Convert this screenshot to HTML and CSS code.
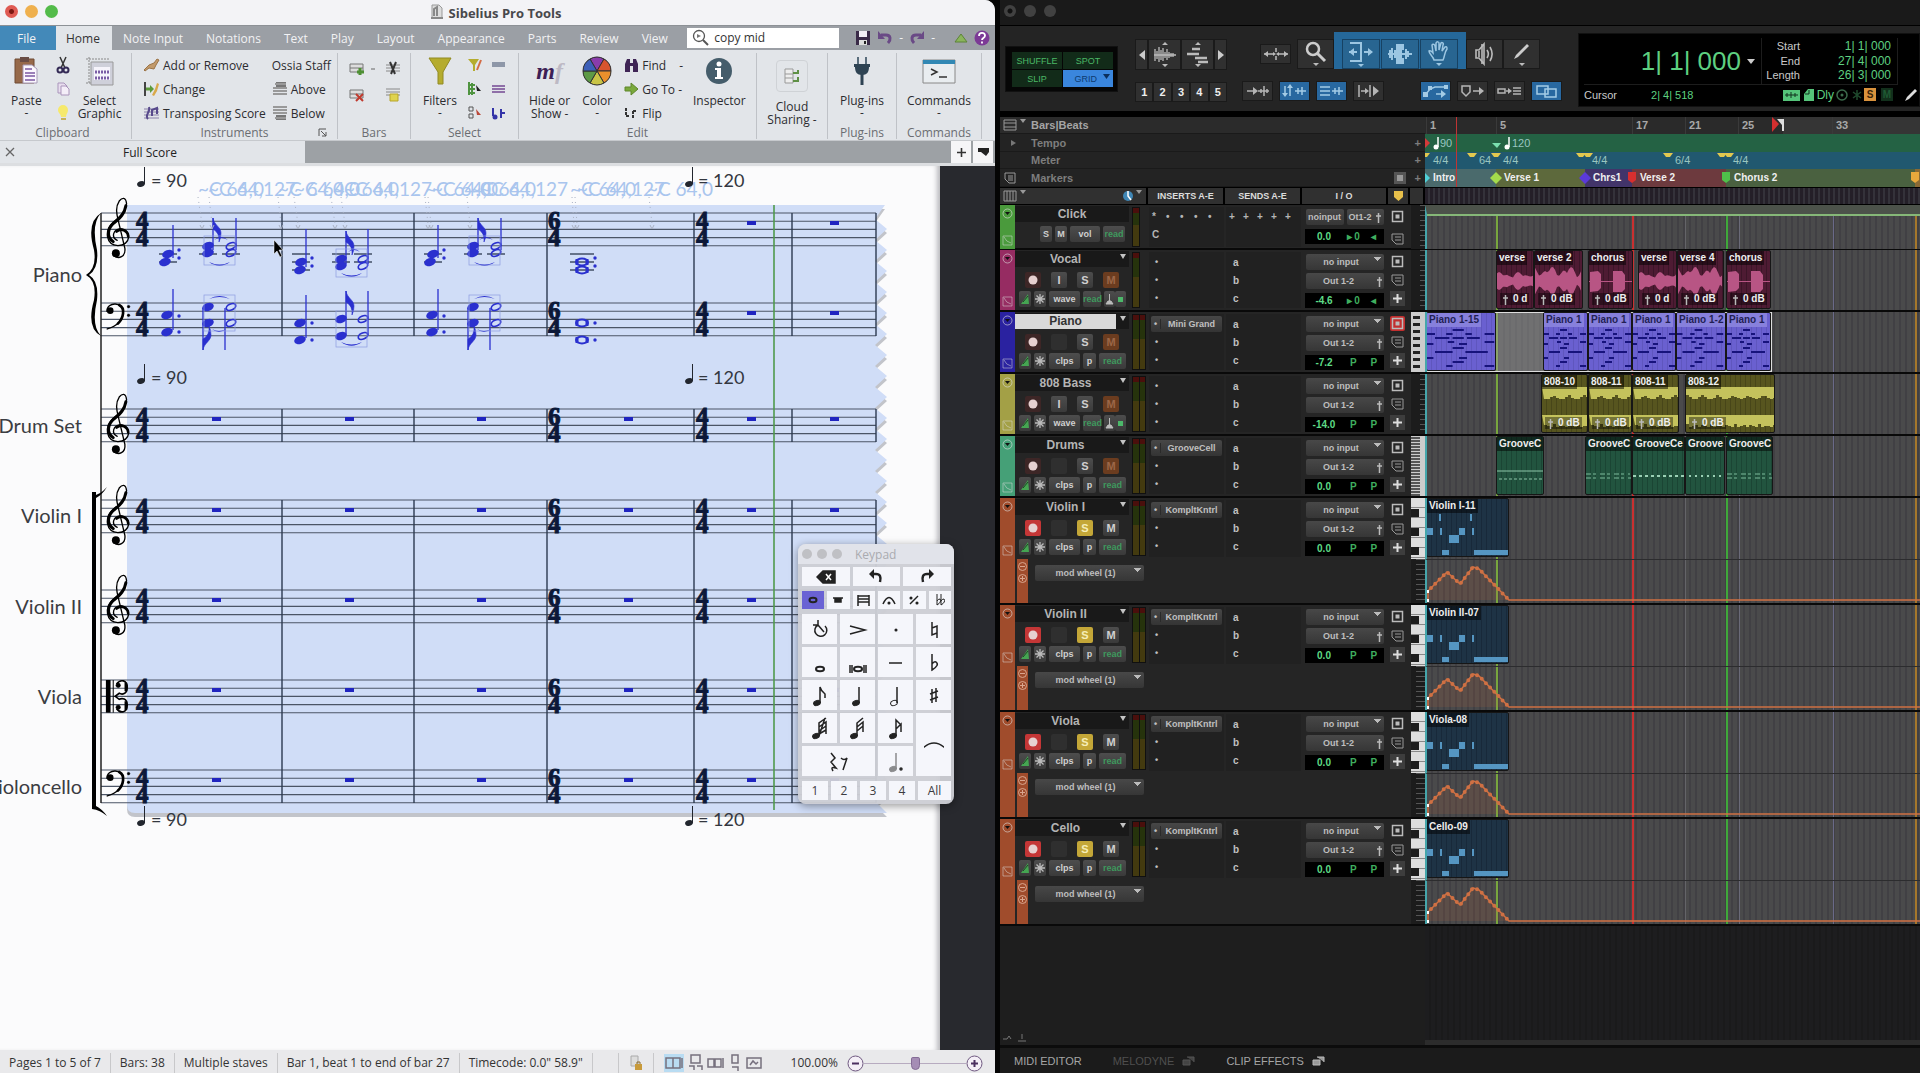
FILE: index.html
```html
<!DOCTYPE html>
<html lang="en">
<head>
    <meta charset="UTF-8">
    <meta name="viewport" content="width=device-width, initial-scale=1.0">
    <title>Sibelius Pro Tools</title>
    <link rel="stylesheet" href="styles.css">
</head>
<body>
    <main class="sib">
        <header class="sib-title">
            <span class="lights"><i class="red"></i><i class="amber"></i><i class="green"></i></span>
            <h1>
                <svg width="14" height="16" viewBox="0 0 14 16"><path d="M2 1h7l3 3v10H2z" fill="#ddd" stroke="#999"/><path d="M4 12V5l3-2v9M1 14h12" stroke="#888" stroke-width="2" fill="none"/></svg>
                Sibelius Pro Tools
            </h1>
        </header>

        <nav class="tabs">
            <a href="#" class="file">File</a>
            <a href="#" class="active">Home</a>
            <a href="#">Note Input</a>
            <a href="#">Notations</a>
            <a href="#">Text</a>
            <a href="#">Play</a>
            <a href="#">Layout</a>
            <a href="#">Appearance</a>
            <a href="#">Parts</a>
            <a href="#">Review</a>
            <a href="#">View</a>
            <label class="search">
                <svg width="18" height="18" viewBox="0 0 18 18"><circle cx="7" cy="7" r="5.500" fill="#fff" stroke="#555" stroke-width="1.300"/><path d="M11 11l5 5" stroke="#555" stroke-width="2"/><path d="M5 5l4 2-4 2z" fill="#777"/></svg>
                <input type="text" value="copy mid" aria-label="Find in ribbon">
            </label>
            <div class="quick">
                <button aria-label="Save"><svg width="16" height="16" viewBox="0 0 16 16"><path d="M1 1h14v14H1z" fill="#3a2a48"/><path d="M4 1h8v6H4z" fill="#f2eef5"/><path d="M4 10h8v5H4z" fill="#ddd"/><path d="M9 11h2v3H9z" fill="#222"/></svg></button>
                <button aria-label="Undo"><svg width="16" height="16" viewBox="0 0 16 16"><path d="M4 5h5c5 0 5 5 2 8" fill="none" stroke="#6a4a86" stroke-width="3"/><path d="M1 1v8h7z" fill="#6a4a86"/></svg></button>
                <i>-</i>
                <button aria-label="Redo"><svg width="16" height="16" viewBox="0 0 16 16"><path d="M12 5H7c-5 0-5 5-2 8" fill="none" stroke="#6a4a86" stroke-width="3"/><path d="M15 1v8H8z" fill="#6a4a86"/></svg></button>
                <i>-</i>
                <button class="gap" aria-label="Minimize ribbon"><svg width="14" height="14" viewBox="0 0 14 14"><path d="M7 3l6 8H1z" fill="#8ab45c" stroke="#5c8438"/></svg></button>
                <button aria-label="Help"><svg width="16" height="16" viewBox="0 0 16 16"><circle cx="8" cy="8" r="7.500" fill="#7c3a96"/><path d="M5 6c0-4 6-4 6-.5C11 8 8 8 8 10m0 1.500v2" fill="none" stroke="#fff" stroke-width="1.800"/></svg></button>
            </div>
        </nav>

        <section class="ribbon">
            <div class="group clipboard">
                <div class="items">
                    <button class="big">
                        <svg width="26" height="30" viewBox="0 0 26 30"><path d="M2 3h19v24H2z" fill="#96694a" stroke="#6f4a33"/><path d="M7 1h9v5H7z" fill="#6a4d45"/><path d="M10 9h9l5 4v14H10z" fill="#fbf7fd" stroke="#a79bb8"/><path d="M12 13h7m-7 4h10m-10 3h10m-10 4h10" stroke="#9b7fb8" stroke-width="2"/></svg>
                        Paste<b>-</b>
                    </button>
                    <div class="minis">
                        <button aria-label="Cut"><svg width="14" height="18" viewBox="0 0 14 18"><path d="M4 1l5 11M10 1L5 12" stroke="#333" stroke-width="1.500"/><circle cx="4" cy="14" r="2.500" fill="none" stroke="#332a55" stroke-width="2"/><circle cx="10" cy="14" r="2.500" fill="none" stroke="#332a55" stroke-width="2"/></svg></button>
                        <button aria-label="Copy"><svg width="14" height="16" viewBox="0 0 14 16"><path d="M2 2h6l3 3v7H2z" fill="#e8deee" stroke="#aa95bb"/><path d="M5 5h5l3 3v6H5z" fill="#f4eef8" stroke="#aa95bb"/></svg></button>
                        <button aria-label="Ideas"><svg width="14" height="16" viewBox="0 0 14 16"><path d="M2 5a5 5 0 0 1 10 0c0 3-2 4-2 7H5c0-3-3-4-3-7z" fill="#f6e96c"/><path d="M5 13h5v2H5z" fill="#c9b25a"/></svg></button>
                    </div>
                    <button class="big">
                        <svg width="30" height="30" viewBox="0 0 30 30"><path d="M4 1v26M1 3h24M1 27h5" stroke="#888" stroke-dasharray="2 1"/><path d="M6 6h22v23H6z" fill="#cfd0da" stroke="#999"/><path d="M9 11h16v13H9z" fill="#f6f4fb"/><path d="M10 16h14m-14 6h14" stroke="#7a5ca5" stroke-width="3" stroke-dasharray="2 1"/></svg>
                        Select<br>Graphic
                    </button>
                </div>
                <h2>Clipboard</h2>
            </div>
            <div class="group instruments">
                <div class="items">
                    <div class="col">
                        <button><svg width="17" height="14" viewBox="0 0 17 14"><path d="M1 12l5-5 5-2 3-4 2 1-3 5-2 4-5-1-4 3z" fill="#c29a6b" stroke="#9b7447"/></svg>Add or Remove</button>
                        <button><svg width="17" height="16" viewBox="0 0 17 16"><path d="M2 1v14" stroke="#444" stroke-width="2"/><path d="M3 8h6" stroke="#5d9b3c" stroke-width="3"/><path d="M7 4l4 4-4 4z" fill="#5d9b3c"/><path d="M9 14l3-6 2-6 2 1-2 7-3 5z" fill="#d9a94a"/></svg>Change</button>
                        <button><svg width="17" height="14" viewBox="0 0 17 14"><path d="M1 3h15M1 6h15M1 9h15M1 12h15" stroke="#8a80aa"/><path d="M5 13c-4-4 3-7 1-12M9 10V4l5-2v6" fill="none" stroke="#584a8c" stroke-width="2"/></svg>Transposing Score</button>
                    </div>
                    <div class="col">
                        <span>Ossia Staff</span>
                        <button><svg width="16" height="16" viewBox="0 0 16 16"><path d="M4 1h10v5H4z" fill="#777"/><path d="M1 7h14M1 10h14M1 13h14M3 3h11" stroke="#999" stroke-width="2"/></svg>Above</button>
                        <button><svg width="16" height="16" viewBox="0 0 16 16"><path d="M4 10h10v5H4z" fill="#777"/><path d="M1 2h14M1 5h14M1 8h14M3 13h11" stroke="#999" stroke-width="2"/></svg>Below</button>
                    </div>
                </div>
                <h2>Instruments</h2>
                <svg class="launcher" width="9" height="9" viewBox="0 0 9 9"><path d="M1 8V1h7M3 3l5 5M8 4v4H4" fill="none" stroke="#555"/></svg>
            </div>
            <div class="group bars">
                <div class="items quad">
                    <button aria-label="Add bar"><svg width="28" height="16" viewBox="0 0 28 16"><path d="M1 3h13v8H1zM1 7h13" fill="#ddd" stroke="#777"/><path d="M11 7v7m-3-3h7" stroke="#4d8f33" stroke-width="3"/><path d="M22 8h4" stroke="#666"/></svg></button>
                    <button aria-label="Split"><svg width="16" height="16" viewBox="0 0 16 16"><path d="M1 4h14M1 7h14M1 10h14" stroke="#888"/><path d="M5 1l5 12M11 1L6 13" stroke="#333" stroke-width="2"/></svg></button>
                    <button aria-label="Delete bar"><svg width="16" height="16" viewBox="0 0 16 16"><path d="M1 3h13v8H1zM1 7h13" fill="#ddd" stroke="#777"/><path d="M7 7l7 7m0-7l-7 7" stroke="#c03a2e" stroke-width="2"/></svg></button>
                    <button aria-label="Join"><svg width="16" height="16" viewBox="0 0 16 16"><path d="M1 2h14M1 5h14M1 8h14" stroke="#888"/><path d="M5 7h8v7H5z" fill="#dfd34f" stroke="#b7a52a"/></svg></button>
                </div>
                <h2>Bars</h2>
            </div>
            <div class="group select">
                <div class="items">
                    <button class="big">
                        <svg width="24" height="30" viewBox="0 0 24 30"><path d="M1 2h22l-8 14v12h-5V16z" fill="#b5ac2e" stroke="#918a22"/></svg>
                        Filters<b>-</b>
                    </button>
                    <div class="minis two">
                        <button aria-label="Advanced filter"><svg width="15" height="16" viewBox="0 0 15 16"><path d="M1 2h11L8 8v6H6V8z" fill="#b5ac2e"/><path d="M10 13l4-10" stroke="#d36c45" stroke-width="2"/></svg></button>
                        <button aria-label="System"><svg width="15" height="16" viewBox="0 0 15 16"><path d="M1 5h13v5H1z" fill="#8e97a8"/></svg></button>
                        <button aria-label="Select more"><svg width="15" height="16" viewBox="0 0 15 16"><path d="M2 1v13M5 2v12M1 4h7M1 8h7M1 12h7" stroke="#4f9440" stroke-width="2"/><path d="M9 4l5 6h-4z" fill="#222"/></svg></button>
                        <button aria-label="Staff"><svg width="15" height="16" viewBox="0 0 15 16"><path d="M1 5h13M1 8h13M1 11h13" stroke="#8f6fa8" stroke-width="2"/></svg></button>
                        <button aria-label="Select all"><svg width="15" height="16" viewBox="0 0 15 16"><path d="M2 2h4v4H2zM2 9h4v4H2z" fill="none" stroke="#555"/><path d="M9 4l5 6h-4z" fill="#b9483a"/></svg></button>
                        <button aria-label="Select bars"><svg width="15" height="16" viewBox="0 0 15 16"><path d="M2 11V3M10 13V4" stroke="#3434a8" stroke-width="2"/><circle cx="4" cy="12" r="2.500" fill="#3434a8"/><path d="M9 8h5" stroke="#3434a8" stroke-width="2"/></svg></button>
                    </div>
                </div>
                <h2>Select</h2>
            </div>
            <div class="group edit">
                <div class="items">
                    <button class="big">
                        <span class="mf">m<i>f</i></span>
                        Hide or<br>Show -
                    </button>
                    <button class="big">
                        <svg width="30" height="30" viewBox="-15 -15 30 30"><circle r="14" fill="#333"/><g stroke="#333"><path d="M0 0L-7-12A14 14 0 0 1 7-12z" fill="#8a3cab"/><path d="M0 0L7-12A14 14 0 0 1 14 0z" fill="#d8552f"/><path d="M0 0H14A14 14 0 0 1 7 12z" fill="#ea8f2c"/><path d="M0 0L7 12A14 14 0 0 1-7 12z" fill="#c9c446"/><path d="M0 0L-7 12A14 14 0 0 1-14 0z" fill="#5d9a46"/><path d="M0 0H-14A14 14 0 0 1-7-12z" fill="#3c5fb8"/></g></svg>
                        Color<b>-</b>
                    </button>
                    <div class="col">
                        <button><svg width="15" height="15" viewBox="0 0 15 15"><path d="M1 14V6l2-5h3v4h3V1h3l2 5v8H9V8H6v6z" fill="#3f2555"/></svg>Find <i>-</i></button>
                        <button><svg width="15" height="15" viewBox="0 0 15 15"><path d="M1 5h6V1l7 6-7 6V9H1z" fill="#7aa93c" stroke="#5e862b"/></svg>Go To -</button>
                        <button><svg width="15" height="15" viewBox="0 0 15 15"><path d="M2 2v8m0 0h3M9 5v8m0-8h4" stroke="#333" stroke-width="2" stroke-dasharray="3 1"/></svg>Flip</button>
                    </div>
                    <button class="big">
                        <svg width="28" height="30" viewBox="0 0 28 30"><circle cx="14" cy="15" r="13" fill="#455d6b"/><circle cx="14" cy="8" r="2.500" fill="#fff"/><path d="M10 12h6v9h2v2h-8v-2h2v-7h-2z" fill="#fff"/></svg>
                        Inspector
                    </button>
                </div>
                <h2>Edit</h2>
            </div>
            <div class="group cloud">
                <div class="items">
                    <button class="big">
                        <span class="frame"><svg width="16" height="17" viewBox="0 0 16 17"><path d="M1 1h8v14H1zM1 6h8M1 10h8" fill="#eee" stroke="#999"/><path d="M9 5h5V2m0 7v4H9" fill="none" stroke="#5f9045" stroke-width="2"/></svg></span>
                        Cloud<br>Sharing -
                    </button>
                </div>
            </div>
            <div class="group plugins">
                <div class="items">
                    <button class="big">
                        <svg width="20" height="30" viewBox="0 0 20 30"><path d="M6 1v8M14 1v8" stroke="#5a6d7c" stroke-width="2"/><path d="M2 8h16v3h-1c0 5-2 8-7 8s-7-3-7-8H2z" fill="#2e4353"/><path d="M10 18v11" stroke="#2e4353" stroke-width="3"/></svg>
                        Plug-ins<b>-</b>
                    </button>
                </div>
                <h2>Plug-ins</h2>
            </div>
            <div class="group commands">
                <div class="items">
                    <button class="big">
                        <svg width="34" height="30" viewBox="0 0 34 30"><path d="M1 4h32v23H1z" fill="#e9edf0" stroke="#888"/><path d="M1 4h32v4H1z" fill="#3288b4"/><path d="M9 13l6 3-6 3M17 21h8" fill="none" stroke="#333" stroke-width="1.500"/></svg>
                        Commands<b>-</b>
                    </button>
                </div>
                <h2>Commands</h2>
            </div>
        </section>

        <nav class="docs">
            <div class="doc">
                <button class="close" aria-label="Close tab"><svg width="10" height="10" viewBox="0 0 10 10"><path d="M1 1l8 8M9 1L1 9" stroke="#666" stroke-width="1.300"/></svg></button>
                <span>Full Score</span>
            </div>
            <button aria-label="New tab"><svg width="11" height="11" viewBox="0 0 11 11"><path d="M5.500 1v9M1 5.500h9" stroke="#333" stroke-width="1.600"/></svg></button>
            <button aria-label="Switch tabs"><svg width="13" height="10" viewBox="0 0 13 10"><path d="M1 1h11v4H1zM4 5h8l-3 4z" fill="#222"/></svg></button>
        </nav>

        <section class="desk">
            <div class="page"><svg id="score" class="score"></svg></div>
            <aside class="keypad">
                <h2><i></i><i></i><i></i><span>Keypad</span></h2>
                <div class="keys k3" id="keysTop"></div>
                <div class="keys k6" id="keysMode"></div>
                <div class="keys pad" id="keysPad"></div>
                <div class="keys k5">
                    <button>1</button><button>2</button><button>3</button><button>4</button><button>All</button>
                </div>
            </aside>
        </section>

        <footer class="status">
            <span>Pages 1 to 5 of 7</span>
            <span>Bars: 38</span>
            <span>Multiple staves</span>
            <span>Bar 1, beat 1 to end of bar 27</span>
            <span>Timecode: 0.0" 58.9"</span>
            <span class="blank"></span>
            <span class="lock"><svg width="14" height="18" viewBox="0 0 14 18"><path d="M2 2h7v10H2z" fill="#ddd" stroke="#aaa"/><path d="M6 10h7v6H6z" fill="#c89a3a"/><path d="M8 10V8h3v2" fill="none" stroke="#8a6a2a"/></svg></span>
            <div class="views" id="views"></div>
            <span class="pct">100.00%</span>
            <div class="zoom">
                <button aria-label="Zoom out"><svg width="17" height="17" viewBox="0 0 17 17"><circle cx="8.500" cy="8.500" r="7.500" fill="#f4eff7" stroke="#6e5880"/><path d="M5 8.500h7" stroke="#4b2f60" stroke-width="2"/></svg></button>
                <input type="range" min="0" max="100" value="50" aria-label="Zoom">
                <button aria-label="Zoom in"><svg width="17" height="17" viewBox="0 0 17 17"><circle cx="8.500" cy="8.500" r="7.500" fill="#f4eff7" stroke="#6e5880"/><path d="M5 8.500h7M8.500 5v7" stroke="#4b2f60" stroke-width="2"/></svg></button>
            </div>
        </footer>
    </main>

    <main class="pt">
        <header class="pt-title"><i class="dot"></i><i></i><i></i></header>

        <section class="toolbar">
            <div class="modes">
                <button>SHUFFLE</button><button>SPOT</button>
                <button>SLIP</button><button class="on">GRID <svg width="7" height="5" viewBox="0 0 7 5"><path d="M0 0h7L3.500 5z" fill="#0b2f5c"/></svg></button>
            </div>
            <div class="zoomer">
                <div class="row tall">
                    <button class="thin" aria-label="Zoom out"><svg width="6" height="10" viewBox="0 0 6 10"><path d="M6 0v10L0 5z" fill="#ccc"/></svg></button>
                    <button aria-label="Audio zoom"><svg width="24" height="26" viewBox="0 0 24 26"><path d="M9 3l3-3 3 3zM9 22l3 3 3-3z" fill="#bbb"/><path d="M1 13h22M2 7v12M4 9v8M6 5v15M8 8v10M10 6v13M12 10v6M14 7v11M16 10v6M18 11v4M20 11v4" stroke="#bbb" stroke-width="1.300"/></svg></button>
                    <button aria-label="MIDI zoom"><svg width="24" height="26" viewBox="0 0 24 26"><path d="M9 3l3-3 3 3zM9 22l3 3 3-3z" fill="#bbb"/><path d="M6 7h8M1 12h12M9 16h12M12 20h10" stroke="#bbb" stroke-width="2.500"/></svg></button>
                    <button class="thin" aria-label="Zoom in"><svg width="6" height="10" viewBox="0 0 6 10"><path d="M0 0v10l6-5z" fill="#ccc"/></svg></button>
                </div>
                <div class="row five"><button>1</button><button>2</button><button>3</button><button>4</button><button>5</button></div>
            </div>
            <div class="tools">
                <div class="row">
                    <button class="small" aria-label="Zoom toggle"><svg width="26" height="14" viewBox="0 0 26 14"><path d="M1 7h9M16 7h9M13 1v4M13 9v4" stroke="#bbb" stroke-width="1.500"/><path d="M5 4L1 7l4 3zM21 4l4 3-4 3zM10 5l3 2-3 2zM16 5l-3 2 3 2z" fill="#bbb"/></svg></button>
                    <button aria-label="Zoomer"><svg width="22" height="26" viewBox="0 0 22 26"><circle cx="8" cy="8" r="6" fill="none" stroke="#ccc" stroke-width="2.500"/><path d="M12 12l8 8" stroke="#ccc" stroke-width="3"/><path d="M8 22h6l-3 3z" fill="#bbb"/></svg></button>
                    <div class="smart">
                        <button aria-label="Trim"><svg width="26" height="26" viewBox="0 0 26 26"><path d="M2 2h11v18H2M1 11h8M16 11h8" fill="none" stroke="#9cc6e2" stroke-width="2"/><path d="M6 7L1 11l5 4zM20 7l5 4-5 4z" fill="#9cc6e2"/><path d="M10 23h6l-3 3z" fill="#9cc6e2"/></svg></button>
                        <button aria-label="Selector"><svg width="26" height="24" viewBox="0 0 26 24"><path d="M9 2h8v6h-2v8h2v6H9v-6H7V8h2z" fill="#9cc6e2"/><path d="M1 12h24M3 8v8M5 6v12M19 7v10M21 9v6" stroke="#9cc6e2" stroke-width="2"/></svg></button>
                        <button aria-label="Grabber"><svg width="22" height="26" viewBox="0 0 22 26"><path d="M6 19c-1-4-5-6-5-9 2-1 3 1 4 2L4 4c1-2 3 0 3 1l1 5V2c1-2 3-1 3 0v7l2-7c1-1 3 0 2 2l-1 6 3-4c2-1 2 1 2 2-3 4-2 7-4 11z" fill="none" stroke="#9cc6e2" stroke-width="1.500"/><path d="M8 22h6l-3 3z" fill="#9cc6e2"/></svg></button>
                    </div>
                    <button aria-label="Scrubber"><svg width="22" height="24" viewBox="0 0 22 24"><path d="M2 8h3l5-6v20l-5-6H2z" fill="none" stroke="#bbb" stroke-width="1.600"/><path d="M8 2v20M13 8c2 3 2 5 0 8M16 5c3 5 3 9 0 14M5 9v6" fill="none" stroke="#bbb" stroke-width="1.600"/></svg></button>
                    <button aria-label="Pencil"><svg width="20" height="26" viewBox="0 0 20 26"><path d="M2 18l2-4L15 3l2 2L6 16z" fill="#ccc"/><path d="M7 22h6l-3 3z" fill="#bbb"/></svg></button>
                </div>
                <div class="row opts" id="opts"></div>
            </div>
            <div class="counter">
                <div class="main">1| 1| 000 <svg width="8" height="5" viewBox="0 0 8 5"><path d="M0 0h8L4 5z" fill="#ccc"/></svg></div>
                <dl>
                    <dt>Start</dt><dd>1| 1| 000</dd>
                    <dt>End</dt><dd>27| 4| 000</dd>
                    <dt>Length</dt><dd>26| 3| 000</dd>
                </dl>
                <div class="cursor"><span>Cursor</span><output>2| 4| 518</output></div>
                <div class="flags">
                    <svg width="32" height="14" viewBox="0 0 32 14"><path d="M0 2h17v11H0zM25 1h6v12H21V6z" fill="#55c47a"/><path d="M2 7h13M4 5v4M8 4v6M12 5v4M22 6h4V2" stroke="#12331f" fill="none"/></svg>
                    <span>Dly</span>
                    <svg width="26" height="14" viewBox="0 0 26 14"><circle cx="6" cy="7" r="5" fill="none" stroke="#3c6b4c" stroke-width="1.500"/><circle cx="6" cy="7" r="1.500" fill="#3c6b4c"/><path d="M21 2v10M17 4l8 6M25 4l-8 6" stroke="#1f4a2d" stroke-width="1.500"/></svg>
                    <b class="solo">S</b><b class="mute">M</b>
                </div>
                <svg class="pen" width="14" height="14" viewBox="0 0 14 14"><path d="M1 13l2-4 8-8 2 2-8 8z" fill="#ddd"/></svg>
            </div>
        </section>

        <section class="rulers">
            <div class="names">
                <div class="bb"><svg width="24" height="12" viewBox="0 0 24 12"><path d="M1 1h12v10H1zM1 4h12M1 8h12" fill="none" stroke="#999"/><path d="M17 0h6l-3 4z" fill="#999"/></svg>Bars|Beats</div>
                <div><svg width="24" height="12" viewBox="0 0 24 12"><path d="M8 3l5 3-5 3z" fill="#777"/></svg>Tempo<em>+</em></div>
                <div><svg width="24" height="12"></svg>Meter<em>+</em></div>
                <div><svg width="24" height="12" viewBox="0 0 24 12"><path d="M2 1h10v10H6L2 7zM5 4h5M5 6h5M5 8h5" fill="none" stroke="#999"/></svg>Markers<em><svg width="12" height="12" viewBox="0 0 12 12"><path d="M0 0h12v12H0z" fill="#555"/><path d="M3 3h6v6H3z" fill="#999"/></svg> +</em></div>
            </div>
            <svg id="ruler" class="ruler"></svg>
        </section>

        <section class="heads">
            <div class="list"><svg width="24" height="12" viewBox="0 0 24 12"><path d="M1 1h12v10H1zM4 1v10M7 1v10M10 1v10" fill="none" stroke="#999"/><path d="M17 0h6l-3 4z" fill="#999"/></svg><svg width="20" height="12" viewBox="0 0 20 12"><circle cx="6" cy="6" r="5" fill="#3f86b5"/><path d="M6 1v5l3 4" stroke="#fff" fill="none" stroke-width="1.500"/><path d="M14 0h6l-3 4z" fill="#999"/></svg></div>
            <div>INSERTS A-E</div>
            <div>SENDS A-E</div>
            <div>I / O</div>
            <div><svg width="9" height="10" viewBox="0 0 9 10"><path d="M0 0h9v6L4.500 10 0 6z" fill="#e8c04b"/></svg></div>
            <div></div>
            <div class="stripe"></div>
        </section>

        <section class="tracks" id="tracks"></section>
        <section class="rest"><div class="void"><svg width="30" height="10" viewBox="0 0 30 10"><path d="M1 6h4l2-3 2 3M16 8h8M20 1v5" fill="none" stroke="#777"/></svg></div><div class="empty"></div></section>

        <footer class="dock">
            <button>MIDI EDITOR</button>
            <button class="dim">MELODYNE <svg width="13" height="10" viewBox="0 0 13 10"><path d="M1 4h7v5H1zM5 1h7v5" fill="#444" stroke="#555"/></svg></button>
            <button>CLIP EFFECTS <svg width="13" height="10" viewBox="0 0 13 10"><path d="M1 4h7v5H1zM5 1h7v5" fill="#999" stroke="#bbb"/></svg></button>
        </footer>
    </main>

    <script src="script.js"></script>
</body>
</html>
```
FILE: styles.css
```css
* {
    box-sizing: border-box;
}
body {
    margin: 0;
    min-height: 100vh;
    display: grid;
    grid-template-columns: 995fr 925fr;
    background: #050505;
    font-family: "Open Sans", sans-serif;
    font-size: 12px;
    overflow: hidden;
}
button, input, select {
    font: inherit;
    color: inherit;
    margin: 0;
    padding: 0;
    border: none;
    background: none;
}
h1, h2, dl, dt, dd {
    margin: 0;
    font-size: inherit;
    font-weight: normal;
}
a {
    color: inherit;
    text-decoration: none;
}
svg {
    flex: none;
    display: block;
}
i {
    font-style: normal;
}

/* ---- notation window ---- */
.sib {
    display: flex;
    flex-direction: column;
    min-width: 0;
    border-radius: 0 10px 0 0;
    overflow: hidden;
    background: #e2e5e9;
    color: #2c2c30;
}
.sib-title {
    position: relative;
    height: 25px;
    background: #f3f3f6;
    display: flex;
    align-items: center;
    justify-content: center;
}
.sib-title h1 {
    display: flex;
    gap: 5px;
    font-size: 13px;
    font-weight: 700;
    line-height: 18px;
    color: #48484c;
    padding-right: 4px;
}
.lights {
    position: absolute;
    left: 5px;
    top: 5px;
    display: flex;
    gap: 7px;
}
.lights i {
    width: 13px;
    height: 13px;
    border-radius: 50%;
}
.red { background: radial-gradient(#7c1712 2px, #df5a53 3px); }
.amber { background: #efb04e; }
.green { background: #53bb4a; }

.tabs {
    height: 25px;
    display: flex;
    background: #9b9fa5;
    color: #f2f2f4;
    line-height: 26px;
    border-top: 1px solid #8d9196;
}
.tabs a {
    padding: 0 12px 0 11px;
    font-size: 12px;
    white-space: nowrap;
}
.tabs .file {
    width: 56px;
    padding: 0 17px;
    background: #4389b9;
}
.tabs .active {
    width: 56px;
    padding: 0 10px;
    background: #e2e5e9;
    color: #333;
}
.search {
    display: flex;
    align-items: center;
    gap: 4px;
    width: 152px;
    height: 20px;
    margin: 2px 16px 0 auto;
    padding-left: 5px;
    background: #fff;
    color: #333;
}
.search input {
    width: 120px;
    outline: none;
}
.quick {
    display: flex;
    align-items: center;
    gap: 6px;
    margin-right: 5px;
}
.quick .gap {
    margin-left: 13px;
}

.ribbon {
    height: 91px;
    display: flex;
    padding-top: 3px;
    border-bottom: 1px solid #c6c9cd;
}
.group {
    position: relative;
    flex: none;
    height: 86px;
    border-right: 1px solid #bfc2c7;
    display: flex;
    flex-direction: column;
    white-space: nowrap;
}
.group h2 {
    margin-top: auto;
    text-align: center;
    line-height: 12px;
    color: #6b6d72;
}
.items {
    display: flex;
    line-height: 13px;
}
.clipboard { width: 132px; }
.clipboard h2 { padding-right: 6px; }
.instruments { width: 206px; }
.bars { width: 73px; }
.select { width: 108px; }
.edit { width: 238px; }
.cloud { width: 71px; }
.plugins { width: 69px; }
.commands { width: 85px; }
.big {
    display: flex;
    flex-direction: column;
    align-items: center;
    padding-top: 3px;
    line-height: 13px;
    text-align: center;
}
.big svg, .mf {
    margin-bottom: 8px;
}
.big b {
    font-weight: normal;
    line-height: 12px;
}
.mf {
    font: italic bold 24px/30px "Liberation Serif", serif;
    color: #3d1f56;
}
.mf i {
    font-style: italic;
    color: #bdb9c4;
}
.frame {
    width: 32px;
    height: 32px;
    margin: 4px 0 8px;
    border: 1px solid #cfd2d6;
    border-radius: 4px;
    display: grid;
    place-items: center;
}
.frame svg {
    margin: 0;
}
.clipboard .items { padding-left: 11px; }
.clipboard .items > :last-child { margin-left: 8px; }
.minis {
    display: grid;
    grid-template-rows: repeat(3, 24px);
    align-items: center;
    padding-left: 14px;
}
.minis.two {
    grid-template-columns: 24px 20px;
    padding-left: 10px;
}
.col {
    display: grid;
    grid-template-rows: repeat(3, 24px);
    align-items: center;
}
.col button {
    display: flex;
    align-items: center;
    gap: 3px;
}
.instruments .items {
    padding-left: 11px;
    gap: 6px;
}
.launcher {
    position: absolute;
    right: 10px;
    bottom: 2px;
}
.quad {
    display: grid;
    grid-template: repeat(2, 26px) / repeat(2, 36px);
    padding: 3px 0 0 11px;
    justify-items: start;
}
.select .items { padding-left: 12px; }
.edit .items { padding-left: 10px; }
.edit .items > :nth-child(2) { margin-left: 12px; }
.edit .col { margin-left: 12px; }
.edit .items > :last-child { margin-left: 10px; }
.edit .col i { margin-left: 10px; }
.cloud .items, .plugins .items, .commands .items { justify-content: center; }

.docs {
    height: 25px;
    display: flex;
    background: #9da1a5;
    border-bottom: 3px solid #dcdee1;
}
.doc {
    width: 305px;
    margin-right: auto;
    display: flex;
    align-items: center;
    background: #e2e5e9;
}
.doc span {
    flex: 1;
    text-align: center;
    padding-right: 20px;
    color: #222;
}
.doc .close {
    margin-left: 5px;
}
.docs > button {
    width: 20px;
    margin-right: 2px;
    background: #f5f5f7;
    display: grid;
    place-items: center;
}

.desk {
    position: relative;
    flex: 1;
    background: #28292e;
    overflow: hidden;
}
.page {
    position: relative;
    width: 94.500%;
    height: 100%;
    background: #fbfbfc;
    box-shadow: inset -6px 0 5px -3px #b9b9bd;
}
.score {
    width: 100%;
    height: 100%;
}
.score text {
    font-family: Lato, sans-serif;
    font-size: 20px;
    fill: #3b3d42;
}
.score .tempo { font-size: 18px; fill: #33373f; }
.score .midi { font-size: 19px; fill: #a9c5ee; }
.score .meter {
    font: bold 25px "Liberation Serif", serif;
    fill: #0c1838;
    stroke: #0c1838;
    stroke-width: 1px;
}
.keypad {
    position: absolute;
    left: 798px;
    top: 378px;
    width: 156px;
    padding: 0 3px 4px 4px;
    border-radius: 8px;
    background: rgba(205, 206, 212, .96);
    box-shadow: 0 2px 8px rgba(0, 0, 0, .4);
}
.keypad h2 {
    display: flex;
    align-items: center;
    gap: 5px;
    height: 20px;
    margin: 0 -3px 3px -4px;
    padding-left: 4px;
    border-radius: 8px 8px 0 0;
    background: #e1e3ea;
    color: #aaabb0;
}
.keypad h2 i {
    width: 10px;
    height: 10px;
    border-radius: 50%;
    background: #bfc0c4;
}
.keypad h2 span { margin-left: 8px; }
.keys {
    display: grid;
    gap: 3px;
    margin-bottom: 5px;
}
.keys button {
    display: grid;
    place-items: center;
    background: #f5f6fb;
    color: #3c3c40;
}
.k3 { grid: 19px / repeat(3, 1fr); }
.k6 { grid: 18px / repeat(6, 1fr); }
.k5 {
    grid: 19px / repeat(4, 26px) 1fr;
    margin: 0;
}
.pad { grid: repeat(5, 30px) / repeat(4, 1fr); }
.keys .lit { background: #6a62d4; }
.pad .tall { grid-row: 4 / 6; grid-column: 4; }
.pad .wide { grid-column: 1 / 3; }

.status {
    height: 23px;
    display: flex;
    align-items: center;
    padding-top: 3px;
    background: #e9e9eb;
    color: #333;
    font-size: 12px;
    line-height: 20px;
    white-space: nowrap;
}
.status > span {
    padding: 0 9px;
    border-right: 1px solid #c8c8ca;
}
.status .blank {
    width: 26px;
    height: 20px;
}
.status .lock { padding: 1px 10px; }
.views {
    display: flex;
    align-items: center;
    gap: 4px;
    padding-left: 10px;
}
.views button:first-child { background: #b9dcf2; }
.status .pct { border: none; margin-left: auto; }
.zoom {
    display: flex;
    align-items: center;
    padding-right: 12px;
}
.zoom input {
    appearance: none;
    width: 102px;
    height: 18px;
    background: linear-gradient(#b7abc0, #b7abc0) 0 50% / 100% 1px no-repeat;
}
.zoom input::-webkit-slider-thumb {
    appearance: none;
    width: 9px;
    height: 13px;
    border-radius: 2px 2px 5px 5px;
    background: #a58db5;
    border: 1px solid #846c96;
}

/* ---- edit window ---- */
.pt {
    display: flex;
    flex-direction: column;
    min-width: 0;
    margin-left: 5px;
    background: #1e1e1e;
    color: #c9c9c9;
    font: bold 9px "Liberation Sans", sans-serif;
    overflow: hidden;
}
.pt-title {
    height: 26px;
    display: flex;
    gap: 8px;
    padding: 5px 4px;
    background: #1a1a1a;
    border-bottom: 1px solid #000;
}
.pt-title i {
    width: 12px;
    height: 12px;
    border-radius: 50%;
    background: #414141;
}
.pt-title .dot { background: radial-gradient(#111 2px, #414141 3px); }
.toolbar {
    height: 91px;
    display: flex;
    background: #242424;
    border-bottom: 6px solid #000;
}
.modes {
    display: grid;
    grid: repeat(2, 17px) / repeat(2, 50px);
    gap: 1px;
    width: 113px;
    height: 46px;
    margin: 20px 17px 0 5px;
    padding: 5px 6px;
    background: #060606;
    border: 1px solid #111;
    color: #4cb866;
    font-weight: normal;
}
.modes button { background: #122b19; }
.modes .on {
    display: flex;
    align-items: center;
    justify-content: flex-end;
    gap: 6px;
    padding-right: 3px;
    background: #3a86dd;
    color: #0d3a70;
}
.modes .on svg { margin-bottom: 5px; }
.toolbar .row {
    display: flex;
    align-items: center;
}
.toolbar .row button {
    display: grid;
    place-items: center;
    background: #303030;
    border: 1px solid #1a1a1a;
}
.zoomer {
    width: 92px;
    margin-right: 15px;
    padding-top: 13px;
}
.zoomer .tall { height: 31px; margin-bottom: 12px; }
.zoomer .tall button { flex: 1; height: 31px; }
.zoomer .tall .thin { flex: none; width: 13px; }
.five button { flex: 1; height: 20px; color: #eee; font-size: 11px; font-weight: bold; }
.tools { width: 320px; padding-top: 6px; }
.tools > .row { height: 37px; align-items: flex-end; }
.tools > .row > button {
    width: 37px;
    height: 30px;
}
.tools .row .small {
    width: 31px;
    height: 20px;
    margin: 0 6px 5px 18px;
}
.smart {
    display: flex;
    gap: 1px;
    padding: 7px 8px 0;
    background: #25689a;
}
.tools .row .smart button {
    width: 38px;
    height: 30px;
    background: #286591;
    border: 1px solid #174263;
}
.tools .row.opts {
    height: 20px;
    margin-top: 12px;
    gap: 6px;
}
.tools .row.opts button {
    width: 31px;
    height: 20px;
}
.tools .row.opts button:nth-child(5) { margin-left: 30px; }
.tools .row.opts .on { background: #2868a0; }
.counter {
    flex: 1;
    display: grid;
    grid-template: 46px 20px / 178px 136px 1fr;
    margin: 7px 0 4px 16px;
    padding: 4px 0 0 5px;
    background: #000;
    border: 1px solid #111;
    font-weight: normal;
    color: #5ed081;
}
.counter .main {
    font-size: 26px;
    line-height: 46px;
    padding-right: 6px;
    text-align: right;
    border-right: 1px solid #1d1d1d;
    display: flex;
    align-items: center;
    justify-content: flex-end;
    gap: 6px;
}
.counter dl {
    display: grid;
    grid-template-columns: 38px 1fr;
    font-size: 12px;
    line-height: 13px;
    padding: 2px 6px 0 0;
    border-right: 1px solid #1d1d1d;
    text-align: right;
}
.counter dt {
    color: #c9c9c9;
    font-size: 11px;
}
.cursor {
    display: flex;
    gap: 34px;
    grid-row: 2;
    font-size: 11px;
    line-height: 20px;
    border-top: 1px solid #1d1d1d;
}
.cursor span { color: #c9c9c9; }
.flags {
    grid-row: 2;
    grid-column: 2;
    display: flex;
    align-items: center;
    justify-content: flex-end;
    gap: 2px;
    padding-right: 5px;
    font-size: 12px;
    border-top: 1px solid #1d1d1d;
}
.flags b {
    width: 12px;
    line-height: 13px;
    font-size: 10px;
    text-align: center;
}
.flags .solo { background: #d9923c; color: #3a2408; }
.flags .mute { background: #12301c; color: #1f5a34; margin-left: 3px; }
.pen { grid-row: 2; grid-column: 3; margin: 4px 0 0 6px; }

.rulers {
    display: flex;
    height: 70px;
}
.names {
    width: 425px;
    color: #7d7d7d;
    font-size: 11px;
}
.names > div {
    display: flex;
    align-items: center;
    gap: 4px;
    height: 17px;
    padding-left: 3px;
    border-bottom: 1px solid #1a1a1a;
    background: #232323;
}
.names > div:nth-child(even) { height: 18px; }
.names .bb { background: #2b2b2b; color: #a5a5a5; }
.names em {
    display: flex;
    gap: 9px;
    align-items: center;
    margin-left: auto;
    padding-right: 4px;
    font-style: normal;
    line-height: 12px;
}
.ruler {
    flex: 1;
    min-width: 0;
    height: 70px;
    background: #2a2a2a;
}
.ruler text {
    font-size: 10px;
    fill: #b9b9b9;
}
.ruler .num { font-size: 11px; fill: #a8a8a8; }
.ruler .soft { font-weight: normal; fill: #9ac5c0; font-size: 11px; }
.ruler .name { fill: #f0f0f0; }

.heads, .track {
    display: grid;
    grid-template-columns: 146px 75px 75px 84px 20px 13px 1fr;
    column-gap: 2px;
}
.heads {
    height: 18px;
    background: #000;
    border-top: 1px solid #000;
    border-bottom: 1px solid #000;
    color: #dcdcdc;
}
.heads > div {
    display: grid;
    place-items: center;
    background: #303030;
}
.heads .list {
    display: flex;
    justify-content: space-between;
    padding: 0 4px 0 3px;
}
.heads .stripe { background: repeating-linear-gradient(90deg, #241f28 0 3px, #34323a 3px 5px); }

.track {
    height: 62px;
    background: #252525;
    border-bottom: 2px solid #090909;
    column-gap: 0;
    grid-template-columns: 15px 115px 18px 77px 77px 85px 24px 14px 1fr;
}
.track.click { height: 45px; }
.track.wheel { height: 107px; grid-template-rows: 61px 44px; }
.strip {
    grid-row: 1 / 3;
    display: flex;
    flex-direction: column;
    justify-content: space-between;
    align-items: center;
    padding: 3px 0;
}
.wheel .strip { padding-bottom: 47px; }
.who {
    display: flex;
    flex-direction: column;
    min-width: 0;
}
.who h3 {
    display: flex;
    align-items: center;
    height: 16px;
    margin: 1px 1px 4px 0;
    background: #191919;
    color: #b4b4b4;
    font-size: 12px;
}
.who h3 span {
    flex: 1;
    text-align: center;
    line-height: 15px;
}
.who h3.sel span { background: #d9d9d9; color: #333; }
.who h3 svg { margin: 0 3px 5px 4px; }
.btns {
    display: flex;
    align-items: center;
    height: 17px;
    gap: 10px;
    padding-left: 10px;
    margin-bottom: 3px;
}
.btns button, .lows button {
    display: grid;
    place-items: center;
    height: 16px;
    border-radius: 2px;
    background: linear-gradient(#4d4d4d, #3a3a3a);
    color: #d0d0d0;
}
.btns button {
    width: 16px;
    font-size: 11px;
    font-weight: bold;
}
.btns .rec { background: #3d2626; }
.btns .armed { background: #c43636; }
.btns .off { background: #2f2f2f; }
.btns .solo { background: #c4a738; color: #f6eeb8; }
.btns .mute { background: #6b3c1f; color: #9c6748; }
.lows {
    display: flex;
    gap: 3px;
    padding: 0 4px;
    font-weight: bold;
}
.lows button { width: 12px; }
.lows .mode { width: 31px; }
.lows .auto { flex: 1; color: #3f9a5e; }
.lows .p { width: 13px; }
.lows .pair { display: flex; }
.lows .pair button { width: 11px; }
.lows.clicks { padding: 0 5px 0 25px; }
.lows.clicks .mode { width: 30px; }
.meters {
    display: flex;
    gap: 1px;
    width: 14px;
    height: 56px;
    margin: 2px;
    padding: 1px;
    background: #101010;
}
.meters i {
    flex: 1;
    background: linear-gradient(#4a0f0c 0 5px, #26330c 5px 45%, #433a0f 45%);
}
.meters.mono { width: 8px; }
.click .meters { height: 40px; width: 8px; }
.slots {
    margin: 2px 1px;
    background: #212121;
    display: grid;
    grid-template-rows: repeat(3, 18px);
    align-items: center;
    padding: 1px 2px;
    color: #c0c0c0;
}
.slots span { padding-left: 4px; }
.slots.sends span { padding-left: 5px; font-size: 10px; }
.slots button {
    display: flex;
    align-items: center;
    gap: 3px;
    height: 16px;
    padding-left: 3px;
    border-radius: 2px;
    background: linear-gradient(#474747, #343434);
}
.slots button b {
    border-left: 1px solid #2a2a2a;
    flex: 1;
    white-space: nowrap;
}
.dots {
    margin: 2px 1px;
    padding: 2px 3px;
    color: #b5b5b5;
    background: #212121;
    font-size: 10px;
    line-height: 16px;
    display: grid;
    grid-template: 18px 16px / repeat(5, 14px);
}
.io {
    display: flex;
    flex-direction: column;
    gap: 3px;
    padding: 4px 3px 0 4px;
}
.io select, .io button, .mod {
    height: 16px;
    border-radius: 2px;
    background: linear-gradient(#484848, #363636);
    color: #bebebe;
    font-weight: bold;
}
.io select, .mod {
    appearance: none;
    text-align-last: center;
    padding-right: 8px;
    background:
        linear-gradient(135deg, #bbb 50%, transparent 50%) calc(100% - 2px) 3px / 4px 4px no-repeat,
        linear-gradient(225deg, #bbb 50%, transparent 50%) calc(100% - 6px) 3px / 4px 4px no-repeat,
        linear-gradient(#484848, #363636);
    width: 100%;
}
.io button {
    display: flex;
    justify-content: space-between;
    align-items: center;
    padding: 0 1px 0 17px;
}
.io output {
    display: grid;
    grid-template-columns: 38px 1fr 1fr;
    line-height: 15px;
    margin: 1px 0 0 -1px;
    background: #000;
    color: #3fae5f;
    text-align: center;
    font-size: 10px;
}
.io output b { color: #5edb86; }
.click .io .pair { display: flex; gap: 3px; }
.click .io button { flex: 1; padding: 0 2px; }
.acts {
    display: flex;
    flex-direction: column;
    align-items: center;
    justify-content: space-between;
    padding: 4px 3px 4px 0;
}
.acts button.hot { background: #c22e2e; border-radius: 2px; }
.ticks {
    background: repeating-linear-gradient(#555 0 1px, transparent 1px 5px) 100% 0 / 5px 100% no-repeat, #1c1c1c;
}
.piano { background: repeating-linear-gradient(transparent 0 4px, #222 4px 7px) 2px 0 / 7px 100% no-repeat, #ccc; }
.dense { background: repeating-linear-gradient(transparent 0 1px, #555 1px 3px) 0 0 / 9px 100% no-repeat, #ccc; }
.octave { background: repeating-linear-gradient(transparent 0 11px, #1c1c1c 11px 19px) 0 0 / 8px 100% no-repeat, repeating-linear-gradient(#ddd 0 9px, #888 9px 10px); }
.wheel .ticks { grid-column: 8; background-size: 9px 100%, auto; }

/* marker lines run through every lane */
.lane {
    position: relative;
    min-width: 0;
    overflow: hidden;
    border-left: 2px solid #45a6ab;
    background:
        linear-gradient(#78a63e, #78a63e) 69px 0 / 2px 100% no-repeat,
        linear-gradient(#c93030, #c93030) 205px 0 / 2px 100% no-repeat,
        linear-gradient(#646468, #646468) 258px 0 / 1px 100% no-repeat,
        linear-gradient(#3fa83a, #3fa83a) 299px 0 / 2px 100% no-repeat,
        linear-gradient(#6a6a78, #6a6a78) 312px 0 / 1px 100% no-repeat,
        linear-gradient(#6a6a88, #6a6a88) 406px 0 / 1px 100% no-repeat,
        linear-gradient(#a5772c, #a5772c) 488px 0 / 2px 100% no-repeat,
        repeating-linear-gradient(90deg, #4a4a4b 0 4px, #414044 4px 6px);
}
.click .lane {
    border-top: 9px solid #4c524a;
    box-shadow: inset 0 2px 0 #86b878;
}
.range {
    position: absolute;
    left: 0;
    top: 0;
    width: 345px;
    height: 100%;
    background: rgba(160, 160, 160, .45);
    border: 1px solid #ddd;
}
.clip {
    position: absolute;
    top: 0;
    height: 59px;
    overflow: hidden;
    border: 1px solid #161616;
    border-radius: 2px;
    font-size: 10px;
    color: #eee;
    white-space: nowrap;
}
.clip svg {
    position: absolute;
    left: 0;
    top: 0;
}
.clip span {
    position: relative;
    display: inline-block;
    line-height: 14px;
    padding: 0 2px;
}
.clip small {
    position: absolute;
    left: 3px;
    bottom: 3px;
    display: flex;
    align-items: center;
    gap: 4px;
    font-size: 10px;
    line-height: 12px;
    background: rgba(0, 0, 0, .4);
    padding: 0 2px;
}
.clip small svg { position: static; }
.clip.vocal { background: repeating-linear-gradient(90deg, #4e1b33 0 4px, #3c1528 4px 5px); }
.clip.keys1 { background: repeating-linear-gradient(90deg, #6a60d0 0 4px, #5f56be 4px 5px); color: #221f55; }
.clip.keys1 span { background: #8780dc; }
.clip.bass { background: repeating-linear-gradient(90deg, #57551f 0 4px, #484619 4px 5px); }
.clip.drum { background: repeating-linear-gradient(90deg, #22543f 0 4px, #1b4534 4px 5px); }
.clip.string { background: repeating-linear-gradient(90deg, #1e3345 0 4px, #18293a 4px 5px); }
.clip.vocal span, .clip.bass span, .clip.drum span, .clip.string span { background: rgba(0, 0, 0, .5); }
.ctl {
    grid-column: 2 / 8;
    display: flex;
    gap: 7px;
    padding-left: 2px;
}
.ctl .side {
    width: 11px;
    background: #a04c2c;
    display: flex;
    flex-direction: column;
    align-items: center;
    gap: 3px;
    padding-top: 3px;
}
.ctl .mod {
    width: 109px;
    margin-top: 6px;
}
.curve { grid-column: 9; border-top: 1px solid #2c2c2e; }
.curve svg { width: 100%; height: 44px; }

.rest {
    flex: 1;
    display: grid;
    grid-template-columns: 425px 1fr;
}
.void {
    display: flex;
    align-items: flex-end;
    padding: 0 0 2px 2px;
}
.empty {
    background: repeating-linear-gradient(90deg, #1d1d1f 0 4px, #1a1a1b 4px 6px);
    border-bottom: 5px solid #2c2c2c;
}
.dock {
    height: 28px;
    display: flex;
    gap: 31px;
    padding-left: 14px;
    background: #1b1b1b;
    border-top: 3px solid #0c0c0c;
    color: #a5a5a5;
    font-size: 11px;
    font-weight: normal;
}
.dock button {
    display: flex;
    align-items: center;
    gap: 8px;
}
.dock .dim { color: #4f4f4f; }
```
FILE: script.js
```js
const BLUE = '#2a30cf';
const LINE = '#2c3950';

// ---------- score ----------
const TOP = 166;
const staves = [
    { y: 213, clef: 'treble', name: 'Piano', nameY: 282 },
    { y: 303, clef: 'bass' },
    { y: 409, clef: 'treble', name: 'Drum Set', nameY: 433 },
    { y: 500, clef: 'treble', name: 'Violin I', nameY: 523 },
    { y: 590, clef: 'treble', name: 'Violin II', nameY: 614 },
    { y: 680, clef: 'alto', name: 'Viola', nameY: 704 },
    { y: 770, clef: 'bass', name: 'Violoncello', nameY: 794 }
];
const bars = [282, 414, 547, 694, 792, 876];
const rests = [216, 349, 481, 628, 751, 834];

const line = (x1, y1, x2, y2, w = 1, c = LINE) =>
    `<path d="M${x1} ${y1}L${x2} ${y2}" stroke="${c}" stroke-width="${w}" fill="none"/>`;
const head = (x, y) => `<ellipse cx="${x}" cy="${y}" rx="6" ry="4" transform="rotate(-20 ${x} ${y})" fill="${BLUE}"/>`;
const half = (x, y) => `<ellipse cx="${x}" cy="${y}" rx="5" ry="3" transform="rotate(-24 ${x} ${y})" fill="none" stroke="${BLUE}" stroke-width="1.700"/>`;
const whole = (x, y) => `<ellipse cx="${x}" cy="${y}" rx="6" ry="3.500" fill="none" stroke="${BLUE}" stroke-width="2"/><path d="M${x - 5} ${y - 3}v6M${x + 5} ${y - 3}v6" stroke="${BLUE}" stroke-width="3"/>`;
const dot = (x, y) => `<circle cx="${x}" cy="${y}" r="1.700" fill="${BLUE}"/>`;
const stem = (x, y1, y2) => line(x, y1, x, y2, 1.3, BLUE);
const ledger = (x, y, w = 18) => line(x - w / 2, y, x + w / 2, y, 1.3);
const tie = (x1, x2, y, bend) => `<path d="M${x1} ${y}Q${(x1 + x2) / 2} ${y + bend} ${x2} ${y}Q${(x1 + x2) / 2} ${y + bend * 1.5} ${x1} ${y}" fill="${BLUE}"/>`;
const flag = (x, y, s = 1) => `<path d="M${x} ${y}c1 ${7 * s} 8 ${9 * s} 8 ${15 * s}q0 ${5 * s}-2 ${9 * s}q1 ${-9 * s}-6 ${-13 * s}z" fill="${BLUE}" stroke="${BLUE}" stroke-width=".6"/>`;
const box = (x, y, w, h) => `<rect x="${x}" y="${y}" width="${w}" height="${h}" fill="none" stroke="#8e9be0" stroke-width=".7"/>`;
const quarter = (x, y) => `<g fill="#22262e"><ellipse cx="${x}" cy="${y}" rx="4" ry="2.800" transform="rotate(-20 ${x} ${y})"/><path d="M${x + 3} ${y}v-17h1v17z"/></g>`;

const clefs = {
    treble: `<g fill="none" stroke="#000" stroke-linecap="round" stroke-width="4" transform="scale(.333) translate(0 -158)">
        <path d="M352 240C334 232 338 206 364 206C396 208 394 256 354 256C318 254 312 212 340 186C362 168 380 150 380 130C378 108 366 112 358 122C346 140 350 160 355 180L375 264C378 290 356 298 342 286"/>
        <path d="M340 244C318 228 324 204 342 188C362 172 374 160 378 136" stroke-width="9"/><path d="M350 214C364 200 384 212 385 228" stroke-width="8"/>
        <circle cx="348" cy="279" r="12" fill="#000" stroke="none"/></g>`,
    bass: `<g fill="none" stroke="#000" stroke-linecap="round" transform="scale(.333) translate(0 -430)">
        <path d="M321 455C320 426 372 424 370 460C368 486 348 500 322 508" stroke-width="4"/><path d="M358 436C378 446 370 476 354 492" stroke-width="8"/>
        <circle cx="331" cy="453" r="10" fill="#000" stroke="none"/><circle cx="386" cy="441" r="4" fill="#000"/><circle cx="386" cy="467" r="4" fill="#000"/></g>`,
    alto: `<g fill="none" stroke="#000" transform="scale(.333) translate(0 -300)">
        <path d="M325 300v98" stroke-width="14"/><path d="M340 300v98" stroke-width="3"/>
        <path d="M350 312C362 296 382 300 382 322C382 344 366 344 358 340L346 349L358 358C366 354 382 354 382 376C382 398 362 402 350 386" stroke-width="5"/>
        <path d="M378 308v26M378 364v26" stroke-width="8"/><circle cx="355" cy="316" r="7" fill="#000"/><circle cx="355" cy="382" r="7" fill="#000"/></g>`
};

function phraseA(dx) {
    const x = n => n + dx;
    return ledger(x(168), 254) + ledger(x(168), 262) + head(x(168), 254) + head(x(165), 262) + stem(x(173), 225, 258) + dot(x(179), 250) + dot(x(179), 258)
        + ledger(x(208), 254) + head(x(208), 246) + head(x(208), 253) + stem(x(213), 218, 250) + flag(x(213), 218)
        + ledger(x(231), 254) + half(x(231), 246) + half(x(231), 253) + stem(x(236), 218, 250)
        + tie(x(209), x(230), 262, 5) + tie(x(214), x(228), 240, -4) + box(x(204), 236, 31, 29)
        + head(x(167), 315) + head(x(167), 332) + stem(x(173), 289, 330) + dot(x(179), 316) + dot(x(179), 332)
        + head(x(208), 307) + head(x(208), 323) + stem(x(203), 308, 350) + flag(x(203), 350, -1)
        + half(x(231), 307) + half(x(231), 323) + stem(x(225), 308, 350)
        + tie(x(209), x(230), 299, -4) + tie(x(212), x(226), 329, 4) + box(x(204), 295, 31, 36);
}
function phraseB() {
    return ledger(301, 254) + ledger(301, 262) + ledger(301, 270) + head(301, 262) + head(300, 270) + stem(306, 229, 267) + dot(312, 258) + dot(312, 266)
        + ledger(341, 254) + ledger(341, 262) + head(341, 259) + head(341, 266) + stem(346, 231, 264) + flag(346, 231)
        + ledger(363, 254) + ledger(363, 262) + half(363, 259) + half(363, 266) + stem(368, 229, 264)
        + tie(341, 362, 273, 5) + tie(348, 360, 252, -4) + box(336, 249, 31, 28)
        + head(300, 323) + head(300, 340) + stem(306, 295, 338) + dot(312, 323) + dot(312, 340)
        + head(341, 319) + head(341, 336) + stem(346, 291, 335) + flag(346, 291)
        + half(363, 319) + half(363, 336) + stem(368, 291, 335)
        + tie(341, 362, 342, 5) + box(336, 311, 31, 36);
}

function drawScore() {
    let edge = '';
    for (let y = 219; y < 800; y += 21) {
        edge += `L875 ${y}L887 ${y + 10}`;
    }
    const shape = `M127 205H885${edge}L877 803L887 813H135Q127 813 127 805z`;
    let out = `<path d="${shape}" fill="#c2c4ca" transform="translate(0 4)"/><path d="${shape}" fill="#d0ddf7"/>`;

    staves.forEach((s, i) => {
        for (let n = 0; n < 5; n++) {
            out += line(101, s.y + n * 8.2, 876, s.y + n * 8.2, 1.1, '#4b5566');
        }
        out += `<g transform="translate(0 ${s.y})">${clefs[s.clef]}</g>`;
        [[136, 4], [548, 6], [696, 4]].forEach(([x, top]) => {
            out += `<text class="meter" x="${x}" y="${s.y + 16}">${top}</text><text class="meter" x="${x}" y="${s.y + 33}">4</text>`;
        });
        rests.forEach((x, n) => {
            if (i > 1 || n > 3) out += `<rect x="${x - 4}" y="${s.y + 8}" width="9" height="4" fill="#2024c0"/>`;
        });
        if (s.name) out += `<text x="82" y="${s.nameY}" text-anchor="end">${s.name}</text>`;
    });
    [[213, 336], [409, 442], [500, 803]].forEach(([a, b]) => {
        bars.forEach(x => out += line(x, a, x, b, 1.4));
    });
    out += line(101, 213, 101, 803, 1.5, '#222');
    out += `<path d="M92 492h4v314q6 3 11 10q-7-6-15-7z"/><path d="M92 496q8-1 15-9q-5 8-11 11z"/>`;
    out += `<path d="M101 213Q86 222 94 250Q97 268 86 275Q97 281 94 300Q86 328 101 336Q91 326 97 300Q99 281 89 275Q99 268 97 250Q91 224 101 213z"/>`;

    out += phraseA(0) + phraseB() + phraseA(265);
    out += ledger(582, 254, 24) + ledger(582, 262, 24) + ledger(582, 270, 24);
    [262, 270, 323, 340].forEach(y => out += whole(582, y));
    [258, 266, 323, 340].forEach(y => out += dot(595, y));

    [[198, 0], [208, 127], [278, 0], [294, 0], [333, 0], [344, 127], [425, 0], [432, 0], [470, 0], [480, 127], [570, 0], [577, 127], [647, 0]].forEach(([x, v]) => {
        out += `<text class="midi" x="${x}" y="196">~C 64,${v}</text>`;
    });
    [[198, 202], [209, 212], [278, 281], [294, 298], [331, 335], [341, 345], [425, 428], [428, 431], [467, 470], [572, 574], [575, 577], [649, 652]].forEach(([a, b]) => {
        out += `<path d="M${a} 197L${b} 224" stroke="#aab2c4" stroke-dasharray="1 4"/><path d="M${b - 2} 225l2 4 2-4" stroke="#aab2c4" fill="none"/>`;
    });
    [187, 384, 826].forEach(y => {
        out += quarter(141, y - 3) + `<text class="tempo" x="151" y="${y}">= 90</text>`;
        out += quarter(689, y - 3) + `<text class="tempo" x="698" y="${y}">= 120</text>`;
    });
    out += line(774, 205, 774, 810, 1.6, '#4f9a4c');
    out += '<path d="M274 240v14l3-3 3 6 2-1-3-6h4z" stroke="#fff" stroke-width=".5"/>';
    document.getElementById('score').innerHTML = `<g transform="translate(0 ${-TOP})">${out}</g>`;
}

// ---------- keypad ----------
const ic = (w, h, body) => `<svg width="${w}" height="${h}" viewBox="0 0 ${w} ${h}" fill="none" stroke="#222" stroke-width="1.500">${body}</svg>`;
const nh = (x, y, f = '#222') => `<ellipse cx="${x}" cy="${y}" rx="3.500" ry="2.500" transform="rotate(-20 ${x} ${y})" fill="${f}" stroke-width="1"/>`;
const key = (label, svg, cls = '') => `<button aria-label="${label}" class="${cls}">${svg}</button>`;

function drawKeypad() {
    document.getElementById('keysTop').innerHTML =
        key('Delete', ic(20, 14, '<path d="M1 7l6-6h12v12H7z" fill="#222"/><path d="M10 4l5 6m0-6l-5 6" stroke="#fff"/>')) +
        key('Undo', ic(16, 16, '<path d="M3 5h5q6 0 4 8" stroke-width="2.500"/><path d="M6 0L1 5l5 5z" fill="#222" stroke="none"/>')) +
        key('Redo', ic(16, 16, '<path d="M13 5H8q-6 0-4 8" stroke-width="2.500"/><path d="M10 0l5 5-5 5z" fill="#222" stroke="none"/>'));
    document.getElementById('keysMode').innerHTML =
        key('Common notes', ic(12, 8, '<ellipse cx="6" cy="4" rx="3.500" ry="2.200" stroke-width="2"/>'), 'lit') +
        key('More notes', ic(12, 8, '<path d="M1 2h10M3 2h6v4H3z" fill="#222"/>')) +
        key('Beams', ic(13, 13, '<path d="M1 2h11M1 5h11M1 8h11M1 1v11M12 1v11"/>')) +
        key('Articulations', ic(14, 10, '<path d="M1 9q6-13 12 0"/><circle cx="7" cy="8" r=".8"/>')) +
        key('Jazz', ic(12, 10, '<path d="M10 1L2 9"/><circle cx="3" cy="3" r=".8"/><circle cx="9" cy="8" r=".8"/>')) +
        key('Accidentals', ic(10, 14, '<path d="M2 1v11q5-3 3-6-2 0-3 2M6 1v11q5-3 3-6-2 0-3 2" stroke-width="1"/>'));
    const grid = [
        ['Reset', '<path d="M8 8a6 6 0 1 0 7 1M8 8H3M8 8V3M8 8l6 7"/>'],
        ['Accent', '<path d="M2 9l15 4-15 4"/>'],
        ['Staccato', '<circle cx="10" cy="13" r=".8" fill="#222"/>'],
        ['Natural', '<path d="M8 5v13l5-2M13 21V9l-5 2"/>'],
        ['Whole', '<ellipse cx="10" cy="19" rx="4" ry="2.300" stroke-width="2"/>'],
        ['Breve', '<ellipse cx="10" cy="19" rx="4" ry="2.300" stroke-width="2"/><path d="M2 15v8M4 15v8M16 15v8M18 15v8"/>'],
        ['Tenuto', '<path d="M3 13h13"/>'],
        ['Flat', '<path d="M8 4v16q8-5 4-8-2-1-4 2"/>'],
        ['Eighth', nh(7, 20) + '<path d="M10 20V4q1 4 5 7v4"/>'],
        ['Quarter', nh(8, 20) + '<path d="M11 20V4"/>'],
        ['Half', nh(8, 20, 'none') + '<path d="M11 20V4"/>'],
        ['Sharp', '<path d="M8 6v14M12 5v14M6 11l8-3M6 17l8-3"/>'],
        ['64th', nh(6, 20) + '<path d="M9 20L15 2M9 20V7l7-5M9 11l7-5v12M9 15l7-5M9 18l7-4"/>'],
        ['32nd', nh(6, 20) + '<path d="M9 20V7l6-5M9 11l6-5v10M9 15l6-5"/>'],
        ['16th', nh(7, 20) + '<path d="M10 20V4l5 5M10 13l5-5v8"/>'],
        ['Slur', '<path d="M-1 15q11-10 22 0"/>', 'tall'],
        ['Rests', '<path d="M2 4l4 5-4 4 5 6q-6-2-3 3M12 9q3 3 6 0l-4 12"/>', 'wide'],
        ['Dotted', '<g opacity=".5">' + nh(7, 20) + '<path d="M10 20V4"/></g><circle cx="15" cy="20" r="1"/>']
    ];
    document.getElementById('keysPad').innerHTML = grid.map(([l, b, c]) => key(l, ic(20, 24, b), c)).join('');
    document.getElementById('views').innerHTML = [
        [20, 'M2 4h7v10H2zM9 4h7v10H9zM18 4v10'], [15, 'M3 1h9v8H3zM1 12h5v4M14 16v-4H9'], [18, 'M1 5h6v8H1zM8 5h6v8H8zM16 4v10'],
        [12, 'M3 1h6v8H3zM3 13h6v4'], [18, 'M2 4h14v10H2zM5 11l3-4 3 3 2-2']
    ].map(([w, d]) => key('View', `<svg width="${w}" height="18" viewBox="0 0 ${w} 18"><path d="${d}" fill="none" stroke="#76707e" stroke-width="1.500"/></svg>`)).join('');
}

// ---------- edit window ----------
function drawOptions() {
    const opts = [
        ['M3 8h8M20 3v10M17 6v4M23 6v4M14 8h11', 'M9 4l5 4-5 4z'],
        ['M4 3v9M9 4v9M14 8h11M17 5v6M21 4v8', 'M1 10h6l-3 4zM6 5h6L9 1z', 1],
        ['M2 4h10M2 8h10M2 12h10M14 8h11M17 5v6M21 4v8', '', 1],
        ['M4 2v12M6 8h6M15 2v12', 'M10 5l4 3-4 3zM18 3v10l6-5z'],
        ['M4 11L8 6L13 4H24M14 11h9', 'M1 9h5v5H1zM19 7l5 4-5 4zM6 3h4v4H6zM22 2h4v4h-4z', 1],
        ['M3 3h8v6l-4 4-4-4zM14 8h7', 'M20 4l5 4-5 4z'],
        ['M2 6h7v4H2zM10 8h4M17 5h8M17 8h8M17 11h8', 'M12 5l4 3-4 3z'],
        ['M4 3h11v8H4zM12 6h11v8H12z', '', 1]
    ];
    document.getElementById('opts').innerHTML = opts.map(([s, f, on]) => {
        const c = on ? '#a3cbe6' : '#b5b5b5';
        return `<button aria-label="Option" class="${on ? 'on' : ''}"><svg width="27" height="16" viewBox="0 0 27 16"><path d="${s}" fill="none" stroke="${c}" stroke-width="1.500"/><path d="${f}" fill="${c}"/></svg></button>`;
    }).join('');
}

function drawRuler() {
    const rect = (x, y, w, h, c) => `<rect x="${x}" y="${y}" width="${w}" height="${h}" fill="${c}"/>`;
    const text = (x, y, t, c) => `<text x="${x}" y="${y}" class="${c}">${t}</text>`;
    const tri = (x, c) => `<path d="M${x - 5} 36h10l-3 4h-4z" fill="${c}"/>`;
    let out = rect(358, 0, 900, 17, '#353535') + rect(0, 17, 1200, 18, '#246244') + rect(0, 35, 1200, 17, '#21586f');
    [[5, 1], [75, 5], [211, 17], [264, 21], [317, 25], [411, 33]].forEach(([x, n]) => out += rect(x - 4, 0, 1, 17, '#3a3a3a') + text(x, 12, n, 'num'));
    const note = x => `<path d="M${x + 4} 20v10" stroke="#fff" stroke-width="1.500"/><circle cx="${x + 2}" cy="30" r="2.500" fill="#fff"/>`;
    out += note(9) + text(15, 30, '90', 'soft') + note(80) + text(87, 30, '120', 'soft');
    out += '<path d="M67 26h9l-4 5z" fill="#7be0b0"/><path d="M0 21l5 5-5 5z" fill="#d43a3a"/>';
    [0, 47, 71, 156, 163, 243, 297, 304].forEach(x => out += tri(x, '#e2c84f'));
    [[8, '4/4'], [54, '64'], [78, '4/4'], [167, '4/4'], [250, '6/4'], [308, '4/4']].forEach(([x, t]) => out += text(x, 47, t, 'soft'));
    [[0, 71, '#4a6a6c'], [71, 89, '#5d693c'], [160, 47, '#42346a'], [207, 94, '#6d3a3e'], [301, 189, '#4a6140'], [490, 700, '#8a6a35']].forEach(([x, w, c]) => out += rect(x, 52, w, 18, c));
    out += '<path d="M0 56l5 5-5 5z" fill="#4fd0d8"/><path d="M71 55l6 6-6 6-6-6z" fill="#a4dc4c"/><path d="M160 55l6 6-6 6-6-6z" fill="#5b3ad8"/>';
    [[207, '#d82f2f'], [301, '#4fc04a'], [490, '#e8a83c']].forEach(([x, c]) => out += `<path d="M${x - 4} 55h8v8l-4 3-4-3z" fill="${c}"/>`);
    [[8, 'Intro'], [79, 'Verse 1'], [168, 'Chrs1'], [215, 'Verse 2'], [309, 'Chorus 2']].forEach(([x, t]) => out += text(x, 64, t, 'name'));
    out += rect(31, 0, 1, 70, '#c03434') + '<path d="M347 0l7 7-7 8z" fill="#d42f2f"/><path d="M352 2h7v12h-2V8z" fill="#ddd"/>';
    document.getElementById('ruler').innerHTML = out;
}

const wave = (w, loud, seed) => {
    let up = '', down = '';
    for (let x = 0; x <= w; x += 2) {
        const a = (Math.abs(Math.sin(x * .17 + seed)) * .5 + Math.abs(Math.sin(x * 1.9 + seed)) * .4) * loud + 1;
        up += `L${x} ${30 - a}`;
        down = `L${x} ${30 + a}` + down;
    }
    return `<path d="M0 30${up}${down}z" fill="#b85584"/>`;
};
const blocks = () => '<path d="M1 21l8-1 3 3v14l-3 3-8 1zM24 20h9l3 4v14l-3 3h-9zM0 30h44v1H0z" fill="#b85584"/>';
const bassWave = w => {
    let t = `M0 12H${w}`, b = `M0 40H${w}`, e1 = '', e2 = '';
    for (let x = w; x >= 0; x -= 3) {
        e1 += `V${20 + Math.round(Math.abs(Math.sin(x * 2.3)) * 4)}H${x}`;
        e2 += `V${49 + Math.round(Math.abs(Math.sin(x * 1.7)) * 3)}H${x}`;
    }
    return `<path d="${t}${e1}z${b}${e2}z" fill="#c4c25c"/>`;
};
const midi = k => [[16, 16, 7], [0, 20, 5], [12, 20, 4], [24, 20, 4], [36, 20, 6], [5, 24, 9], [16, 24, 7], [25, 24, 8], [13, 28, 4], [36, 28, 6], [0, 30, 4], [20, 30, 5], [16, 34, 7], [5, 38, 11], [24, 38, 14], [0, 44, 4], [20, 44, 5], [16, 48, 7], [12, 52, 4], [36, 52, 6]]
    .map(([x, y, w]) => `<rect x="${x * k}" y="${y}" width="${w * k}" height="2" fill="#17137c"/>`).join('');
const beats = n => n ? '<path d="M0 37H44M0 41H48" stroke="#7dbb9c" stroke-dasharray="5 2 3 4"/>' : '<path d="M0 34H60" stroke="#8cc5a8"/><path d="M2 42H60" stroke="#8cc5a8" stroke-dasharray="3 2"/>';
const strings = n => [[0, 29, 6, 7], [13, 29, 2, 7], [32, 29, 6, 7], [45, 29, 2, 7], [22, 36, 10, 8], [15, 51, 7, 5], [47, 51, 36, 5]]
    .concat(n ? [[12, 15, 2, 7], [43, 15, 2, 7]] : []).map(([x, y, w, h]) => `<rect x="${x}" y="${y}" width="${w}" height="${h}" fill="#5596c2"/>`).join('');

const fader = '<svg width="7" height="11" viewBox="0 0 7 11"><path d="M3.500 1v10M1 4h5" stroke="#bbb" stroke-width="1.500"/></svg>';
const clip = (kind, x, w, name, art, gain) =>
    `<div class="clip ${kind}" style="left:${x - 2}px;width:${w}px"><svg width="${w}" height="58">${art}</svg><span>${name}</span>${gain ? `<small>${fader}${gain}</small>` : ''}</div>`;

const tracks = [
    { name: 'Click', kind: 'click', color: '#4a9a3c' },
    { name: 'Vocal', kind: 'audio', color: '#962c62', vol: '-4.6', pan: ['▸ 0', '◂'], mono: true, keys: 'ticks',
        clips: clip('vocal', 71, 38, 'verse', wave(38, 9, 1), '0 d') + clip('vocal', 109, 49, 'verse 2', wave(46, 15, 2), '0 dB') + clip('vocal', 163, 45, 'chorus', blocks(), '0 dB') + clip('vocal', 213, 39, 'verse', wave(38, 9, 1), '0 d') + clip('vocal', 252, 47, 'verse 4', wave(44, 15, 2), '0 dB') + clip('vocal', 301, 45, 'chorus', blocks(), '0 dB') },
    { name: 'Piano', kind: 'midi', color: '#2a22a0', vol: '-7.2', insert: 'Mini Grand', sel: true, keys: 'piano',
        clips: '<div class="range"></div>' + clip('keys1', 1, 70, 'Piano 1-15', midi(1.6)) + clip('keys1', 118, 45, 'Piano 1', midi(1)) + clip('keys1', 163, 44, 'Piano 1', midi(1)) + clip('keys1', 207, 44, 'Piano 1', midi(1)) + clip('keys1', 251, 50, 'Piano 1-2', midi(1.1)) + clip('keys1', 301, 45, 'Piano 1', midi(1)) },
    { name: '808 Bass', kind: 'audio', color: '#a3a046', vol: '-14.0', keys: 'ticks',
        clips: clip('bass', 116, 47, '808-10', bassWave(47), '0 dB') + clip('bass', 163, 44, '808-11', bassWave(44), '0 dB') + clip('bass', 207, 47, '808-11', bassWave(47), '0 dB') + clip('bass', 260, 90, '808-12', bassWave(90), '0 dB') },
    { name: 'Drums', kind: 'midi', color: '#45a077', vol: '0.0', insert: 'GrooveCell', keys: 'dense',
        clips: clip('drum', 71, 48, 'GrooveC', beats(0)) + clip('drum', 160, 47, 'GrooveC', beats(1)) + clip('drum', 207, 53, 'GrooveCe', '<path d="M0 39H60" stroke="#9bd0b5" stroke-width="2" stroke-dasharray="3 3"/>') + clip('drum', 260, 40, 'Groove', '<path d="M3 39H60" stroke="#9bd0b5" stroke-width="2" stroke-dasharray="2 4"/>') + clip('drum', 301, 47, 'GrooveC', beats(1)) }
];
[['Violin I', 'Violin I-11', 1], ['Violin II', 'Violin II-07'], ['Viola', 'Viola-08'], ['Cello', 'Cello-09']].forEach(([name, label, n]) => {
    tracks.push({ name, kind: 'wheel', color: '#a04c2c', vol: '0.0', insert: 'KompltKntrl', keys: 'octave', clips: clip('string', 1, 83, label, strings(n)) });
});

const down = '<svg width="6" height="5" viewBox="0 0 6 5"><path d="M0 0h6L3 5z" fill="#c4c4c4"/></svg>';
const freeze = '<svg width="10" height="12" viewBox="0 0 10 12"><path d="M1 11L8 1l1 10z" fill="#45a552"/><path d="M3 9l5-6" stroke="#1d4423"/></svg>';
const star = '<svg width="10" height="10" viewBox="0 0 10 10"><path d="M5 0v10M0 5h10M1.500 1.500l7 7M8.500 1.500l-7 7" stroke="#bbb" stroke-width="1.300"/></svg>';
const frame = '<svg width="15" height="15" viewBox="0 0 15 15"><path d="M2.500 2.500h10v10h-10z" fill="none" stroke="#bbb" stroke-width="1.500"/><path d="M5.500 5.500h4v4h-4z" fill="#bbb"/></svg>';
const memo = '<svg width="13" height="12" viewBox="0 0 13 12"><path d="M1 1h11v10H5L1 7zM4 4h6M4 7h6" fill="none" stroke="#999"/></svg>';
const plus = '<svg width="15" height="15" viewBox="0 0 15 15"><path d="M0 0h15v15H0z" fill="#3d3d3d"/><path d="M7.500 3v9M3 7.500h9" stroke="#ddd" stroke-width="2"/></svg>';
const warp = '<svg width="9" height="11" viewBox="0 0 9 11"><path d="M4.500 0v7M1 10h7l-2-3H3z" stroke="#bbb" fill="#bbb"/></svg>';

function trackRow(t) {
    const wheel = t.kind === 'wheel', click = t.kind === 'click', audio = t.kind === 'audio';
    const strip = `<div class="strip" style="background:${t.color}">
        <svg width="11" height="11" viewBox="0 0 11 11"><circle cx="5.500" cy="5.500" r="4.500" fill="none" stroke="#ddd" stroke-opacity=".6"/><path d="M3 4h5L5.500 7z" fill="#111"/></svg>
        <svg width="11" height="11" viewBox="0 0 11 11"><path d="M1 1h9v9H1zM2 2q2 5 7 6" fill="none" stroke="#ddd" stroke-opacity=".5"/></svg></div>`;
    const title = `<h3 class="${t.sel ? 'sel' : ''}"><span>${t.name}</span>${click ? '' : down}</h3>`;
    if (click) {
        return `<div class="track click">${strip}
            <div class="who">${title}<div class="lows clicks"><button>S</button><button>M</button><button class="mode">vol</button><button class="auto">read</button></div></div>
            <div class="meters"><i></i></div>
            <div class="dots"><span>*</span><span>•</span><span>•</span><span>•</span><span>•</span><span>C</span></div>
            <div class="dots"><span>+</span><span>+</span><span>+</span><span>+</span><span>+</span></div>
            <div class="io"><div class="pair"><button>noinput</button><button>Ot1-2 ${fader}</button></div><output><b>0.0</b><span>▸ 0</span><span>◂</span></output></div>
            <div class="acts"><button aria-label="View">${frame}</button><button aria-label="Comments">${memo}</button></div>
            <div class="ticks"></div><div class="lane"></div></div>`;
    }
    const rec = `<button class="${wheel ? 'armed' : 'rec'}" aria-label="Record"><svg width="10" height="10" viewBox="0 0 10 10"><circle cx="5" cy="5" r="4.500" fill="#e6d0d0"/></svg></button>`;
    const btns = `<div class="btns">${rec}<button class="${audio ? '' : 'off'}">${audio ? 'I' : ''}</button><button class="${wheel ? 'solo' : ''}">S</button><button class="${wheel ? '' : 'mute'}">M</button></div>`;
    const lows = audio
        ? `<button class="mode">wave</button><button class="auto">read</button><div class="pair"><button aria-label="Elastic">${warp}</button><button aria-label="Ticks"><svg width="5" height="5"><rect width="5" height="5" fill="#4cb86a"/></svg></button></div>`
        : '<button class="mode">clps</button><button class="p">p</button><button class="auto">read</button>';
    const pan = t.pan || ['P', 'P'];
    return `<div class="track ${t.kind}">${strip}
        <div class="who">${title}${btns}<div class="lows"><button aria-label="Freeze">${freeze}</button><button aria-label="Star">${star}</button>${lows}</div></div>
        <div class="meters ${t.mono ? 'mono' : ''}"><i></i>${t.mono ? '' : '<i></i>'}</div>
        <div class="slots">${t.insert ? `<button><i>•</i><b>${t.insert}</b></button>` : '<span>•</span>'}<span>•</span><span>•</span></div>
        <div class="slots sends"><span>a</span><span>b</span><span>c</span></div>
        <div class="io"><select aria-label="${t.name} input"><option>no input</option></select><button>Out 1-2 ${fader}</button><output><b>${t.vol}</b><span>${pan[0]}</span><span>${pan[1]}</span></output></div>
        <div class="acts"><button class="${t.sel ? 'hot' : ''}" aria-label="View">${frame}</button><button aria-label="Comments">${memo}</button><button aria-label="Add">${plus}</button></div>
        <div class="${t.keys}"></div><div class="lane">${t.clips}</div>
        ${wheel ? `<div class="ctl"><div class="side">
            <svg width="9" height="9" viewBox="0 0 9 9"><circle cx="4.500" cy="4.500" r="4" fill="none" stroke="#d9a58e"/><path d="M2 4.500h5" stroke="#d9a58e"/></svg>
            <svg width="9" height="9" viewBox="0 0 9 9"><circle cx="4.500" cy="4.500" r="4" fill="none" stroke="#d9a58e"/><path d="M2 4.500h5M4.500 2v5" stroke="#d9a58e"/></svg>
            </div><select class="mod" aria-label="${t.name} controller"><option>mod wheel (1)</option></select></div>
            <div class="ticks"></div>
            <div class="lane curve"><svg><path d="M1 40V31L20 12L33 24L46 7L52 9L82 40z" fill="#c0663a" fill-opacity=".15"/><path d="M1 40V31L20 12L33 24L46 7L52 9L82 40H1200" fill="none" stroke="#cf7043" stroke-width="1.500"/><path d="M4 28L20 12L33 24L46 7L52 9L82 40" fill="none" stroke="#cf7043" stroke-width="4" stroke-linecap="round" stroke-dasharray="0 6"/><path d="M0 30h2v3H0zM0 39h2v3H0z" fill="#fff"/></svg></div>` : ''}
    </div>`;
}

drawScore();
drawKeypad();
drawOptions();
drawRuler();
document.getElementById('tracks').innerHTML = tracks.map(trackRow).join('');
```
